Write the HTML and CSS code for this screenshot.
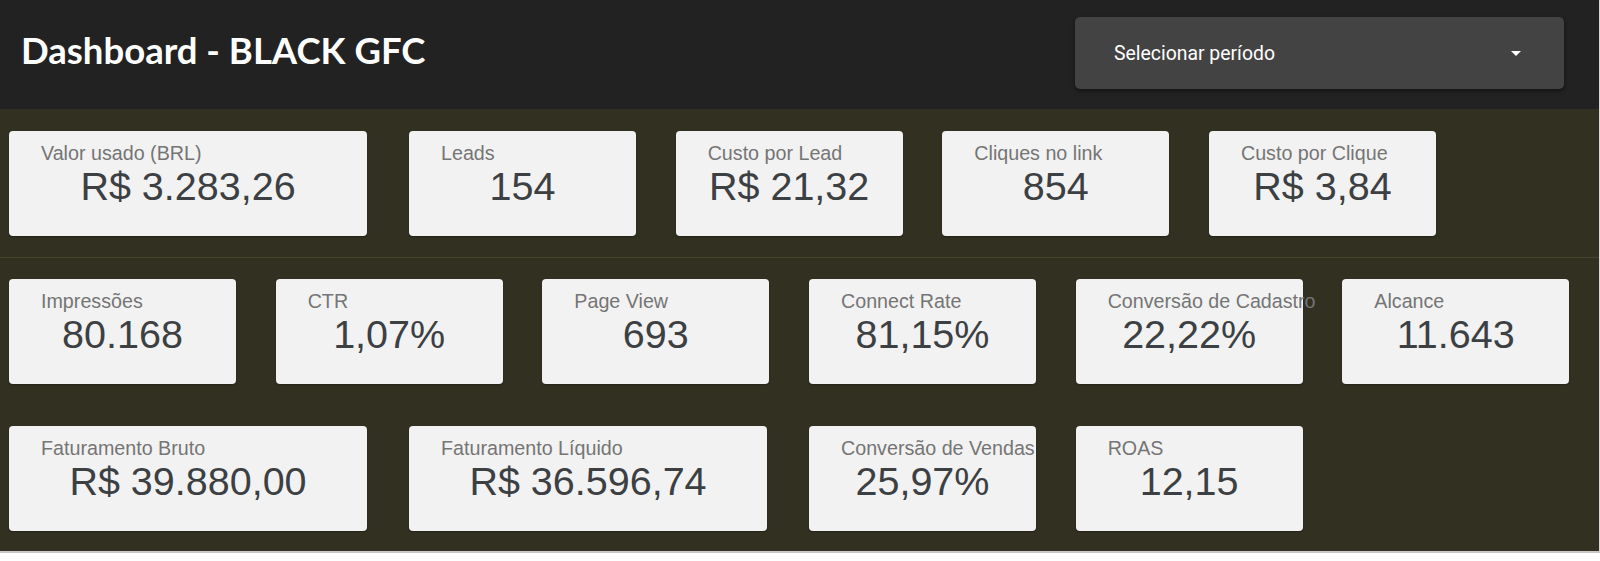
FILE: index.html
```html
<!DOCTYPE html>
<html>
<head>
<meta name="viewport" content="width=device-width, initial-scale=1.0">
<link rel="stylesheet" href="styles.css">
</head>
<body>

<div class="dash">
  <div class="dash-header">
    <h1 class="dash-title">Dashboard - BLACK GFC</h1>
    <div class="period-select">
      <span>Selecionar período</span>
      <span class="caret"></span>
    </div>
  </div>

  <div class="section section-top">
    <div class="card-row">
      <div class="card wide">
        <div class="card-label">Valor usado (BRL)</div>
        <div class="card-value">R$ 3.283,26</div>
      </div>
      <div class="card">
        <div class="card-label">Leads</div>
        <div class="card-value">154</div>
      </div>
      <div class="card">
        <div class="card-label">Custo por Lead</div>
        <div class="card-value">R$ 21,32</div>
      </div>
      <div class="card">
        <div class="card-label">Cliques no link</div>
        <div class="card-value">854</div>
      </div>
      <div class="card">
        <div class="card-label">Custo por Clique</div>
        <div class="card-value">R$ 3,84</div>
      </div>
    </div>
  </div>

  <div class="section section-bottom">
    <div class="card-row">
      <div class="card">
        <div class="card-label">Impressões</div>
        <div class="card-value">80.168</div>
      </div>
      <div class="card">
        <div class="card-label">CTR</div>
        <div class="card-value">1,07%</div>
      </div>
      <div class="card">
        <div class="card-label">Page View</div>
        <div class="card-value">693</div>
      </div>
      <div class="card">
        <div class="card-label">Connect Rate</div>
        <div class="card-value">81,15%</div>
      </div>
      <div class="card">
        <div class="card-label">Conversão de Cadastro</div>
        <div class="card-value">22,22%</div>
      </div>
      <div class="card">
        <div class="card-label">Alcance</div>
        <div class="card-value">11.643</div>
      </div>
    </div>
    <div class="card-row">
      <div class="card wide">
        <div class="card-label">Faturamento Bruto</div>
        <div class="card-value">R$ 39.880,00</div>
      </div>
      <div class="card wide">
        <div class="card-label">Faturamento Líquido</div>
        <div class="card-value">R$ 36.596,74</div>
      </div>
      <div class="card">
        <div class="card-label">Conversão de Vendas</div>
        <div class="card-value">25,97%</div>
      </div>
      <div class="card">
        <div class="card-label">ROAS</div>
        <div class="card-value">12,15</div>
      </div>
    </div>
  </div>
</div>

</body>
</html>
```

FILE: styles.css
```css
* {box-sizing: border-box;}
body {
  margin: 0;
  background: #fff;
  font-family: "Liberation Sans", Arial, sans-serif;
}
.dash {
  width: 1600px;
  background-color: #323021;
  border-right: 1px solid #d6d6d6;
  border-bottom: 2px solid #c9c9c9;
}
.dash-header {
  display: flex;
  justify-content: space-between;
  align-items: flex-start;
  height: 109px;
  padding: 0 35px 0 21px;
  background-color: #222222;
}
.dash-title {
  margin: 32px 0 0 0;
  font-family: Lato, "Noto Sans", sans-serif;
  font-weight: 700;
  font-size: 36.5px;
  line-height: 37px;
  color: #fff;
}
.period-select {
  display: flex;
  justify-content: space-between;
  align-items: center;
  width: 489px;
  height: 72px;
  margin-top: 17px;
  padding: 0 43px 0 39px;
  background-color: #434343;
  border-radius: 5px;
  box-shadow: 0 2px 4px rgba(0,0,0,0.45);
  font-family: Roboto, "Liberation Sans", sans-serif;
  font-size: 19.4px;
  color: #fff;
}
.caret {
  width: 0;
  height: 0;
  border-left: 5px solid transparent;
  border-right: 5px solid transparent;
  border-top: 5px solid #fff;
}
.section {
  display: flex;
  flex-direction: column;
  gap: 42px;
}
.section-top {
  padding: 22px 0 21px;
  border-bottom: 1px solid #46432f;
}
.section-bottom {
  padding: 21px 0 20px;
}
.card-row {
  display: grid;
  grid-template-columns: repeat(12, 133.333px);
}
.card {
  grid-column: span 2;
  width: 227px;
  height: 105px;
  margin-left: 9px;
  padding: 12px 0 0 32px;
  background-color: #f2f2f2;
  border-radius: 4px;
  box-shadow: 0 1px 2px rgba(0,0,0,0.3);
}
.card.wide {
  grid-column: span 3;
  width: 358px;
}
.card-label {
  font-size: 19.7px;
  line-height: 20px;
  color: #757575;
  white-space: nowrap;
}
.card-value {
  margin: 4px 0 0 -32px;
  font-size: 39.5px;
  line-height: 39px;
  text-align: center;
  color: #3c4043;
  white-space: nowrap;
}
```
